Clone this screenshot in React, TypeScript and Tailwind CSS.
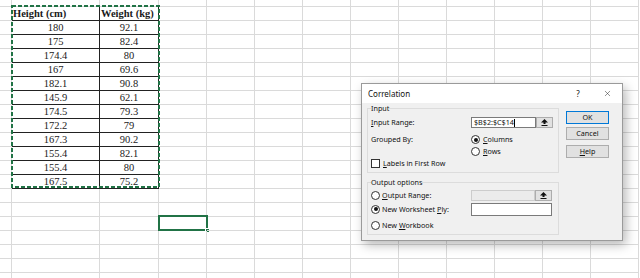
import { X } from 'lucide-react'

const data = [
  ['180', '92.1'],
  ['175', '82.4'],
  ['174.4', '80'],
  ['167', '69.6'],
  ['182.1', '90.8'],
  ['145.9', '62.1'],
  ['174.5', '79.3'],
  ['172.2', '79'],
  ['167.3', '90.2'],
  ['155.4', '82.1'],
  ['155.4', '80'],
  ['167.5', '75.2'],
]

const COLS = 13
const ROWS = 21

function GridCell({ r, c }: { r: number; c: number }) {
  const inTable = (c === 1 || c === 2) && r >= 1 && r <= 13
  const selected = r === 16 && c === 3
  let text = ''
  if (inTable) {
    if (r === 1) text = c === 1 ? 'Height (cm)' : 'Weight (kg)'
    else text = data[r - 2][c - 1]
  }
  return (
    <div
      className={
        inTable
          ? 'relative border-r border-b border-[#222] overflow-hidden whitespace-nowrap leading-[13px] text-[#1a1a1a]'
          : 'relative border-r border-b border-[#dadada]'
      }
    >
      {inTable && r === 1 && <span className="block pl-[1px] font-bold text-[10.5px]">{text}</span>}
      {inTable && r > 1 && <span className="block text-center text-[10.5px]">{text}</span>}
      {selected && (
        <div className="absolute left-[-1px] top-[-2px] w-[50px] h-[16px] border-2 border-[#217346]">
          <div className="absolute right-[-4px] bottom-[-4px] w-[5px] h-[5px] bg-[#217346] border border-white" />
        </div>
      )}
    </div>
  )
}

function RefButton() {
  return (
    <div className="w-[17px] h-full flex items-center justify-center bg-[#e1e1e1] border border-[#adadad]">
      <svg width="7" height="7" viewBox="0 0 7 7">
        <path d="M3.5 0 L7 3.5 H4.5 V5 H2.5 V3.5 H0 Z" fill="#111" />
        <rect x="0.5" y="6" width="6" height="1" fill="#111" />
      </svg>
    </div>
  )
}

function Radio({ checked }: { checked?: boolean }) {
  return (
    <span className="w-[9px] h-[9px] rounded-full border border-[#333] bg-white flex items-center justify-center shrink-0">
      {checked && <span className="w-[4px] h-[4px] rounded-full bg-[#111]" />}
    </span>
  )
}

function CorrelationDialog() {
  return (
    <div className="absolute left-[361px] top-[83px] w-[262px] h-[158px] border border-[#9a9a9a] bg-[#f0f0f0] shadow-[3px_4px_10px_rgba(0,0,0,0.28)] font-['Noto_Sans',sans-serif] text-[7.2px] text-[#111] flex flex-col">
      {/* Title bar */}
      <div className="h-[19px] bg-white flex items-center pl-[6px] pr-[10px]">
        <span className="text-[8px]">Correlation</span>
        <span className="ml-auto w-[10px] text-center text-[8px]">?</span>
        <X className="ml-[20px] w-[9px] h-[9px] text-[#222]" strokeWidth={1.3} />
      </div>

      {/* Body */}
      <div className="flex flex-1 pl-[5px]">
        <div className="w-[192px] flex flex-col">
          <fieldset className="border border-[#dcdcdc] px-[3px] pb-[3px]">
            <legend className="leading-[10px]">Input</legend>
            <div className="mt-[4px] h-[11px] flex items-center">
              <span className="w-[100px]">
                <u>I</u>nput Range:
              </span>
              <div className="flex h-full">
                <div className="w-[65px] bg-white border border-[#7a7a7a] flex items-center pl-[2px]">
                  $B$2:$C$14
                  <span className="w-px h-[8px] bg-black" />
                </div>
                <RefButton />
              </div>
            </div>
            <div className="mt-[6px] h-[11px] flex items-center">
              <span className="w-[100px]">Grouped By:</span>
              <Radio checked />
              <span className="ml-[3px]">
                <u>C</u>olumns
              </span>
            </div>
            <div className="mt-[1px] h-[11px] flex items-center pl-[100px]">
              <Radio />
              <span className="ml-[3px]">
                <u>R</u>ows
              </span>
            </div>
            <div className="mt-[1px] h-[11px] flex items-center">
              <span className="w-[9px] h-[9px] border border-[#333] bg-white shrink-0" />
              <span className="ml-[3px]">
                <u>L</u>abels in First Row
              </span>
            </div>
          </fieldset>

          <fieldset className="mt-[4px] border border-[#dcdcdc] px-[3px] pb-[3px]">
            <legend className="leading-[10px]">Output options</legend>
            <div className="mt-[3px] h-[11px] flex items-center">
              <span className="w-[100px] flex items-center">
                <Radio />
                <span className="ml-[2px]">
                  <u>O</u>utput Range:
                </span>
              </span>
              <div className="flex h-full">
                <div className="w-[64px] bg-[#ebebeb] border border-[#cccccc]" />
                <RefButton />
              </div>
            </div>
            <div className="mt-[2px] h-[13px] flex items-center">
              <span className="w-[100px] flex items-center">
                <Radio checked />
                <span className="ml-[2px]">
                  New Worksheet <u>P</u>ly:
                </span>
              </span>
              <div className="w-[81px] h-full bg-white border border-[#7a7a7a]" />
            </div>
            <div className="mt-[4px] h-[11px] flex items-center">
              <Radio />
              <span className="ml-[2px]">
                New <u>W</u>orkbook
              </span>
            </div>
          </fieldset>
        </div>

        {/* Buttons */}
        <div className="ml-[7px] w-[43px] pt-[8px] flex flex-col">
          <button className="h-[13px] bg-[#e1e1e1] border border-[#0078d7] text-center leading-none">OK</button>
          <button className="mt-[3px] h-[13px] bg-[#e1e1e1] border border-[#adadad] text-center leading-none">Cancel</button>
          <button className="mt-[5px] h-[13px] bg-[#e1e1e1] border border-[#adadad] text-center leading-none">
            <u>H</u>elp
          </button>
        </div>
      </div>
    </div>
  )
}

export default function App() {
  const cells = []
  for (let r = 0; r < ROWS; r++) {
    for (let c = 0; c < COLS; c++) {
      cells.push(<GridCell key={`${r}-${c}`} r={r} c={c} />)
    }
  }

  return (
    <div className="relative w-[640px] h-[278px] overflow-hidden bg-white font-['Liberation_Serif',serif]">
      <div className="grid grid-cols-[12px_88px_59px_repeat(10,48px)] grid-rows-[7px_repeat(20,14px)]">
        {cells}
      </div>

      {/* copy selection (marching ants) */}
      <svg className="absolute left-[11px] top-[5px]" width="149" height="183">
        <rect x="1" y="1" width="147" height="181" fill="none" stroke="#217346" strokeWidth="2" strokeDasharray="4 2" />
      </svg>

      <CorrelationDialog />
    </div>
  )
}
